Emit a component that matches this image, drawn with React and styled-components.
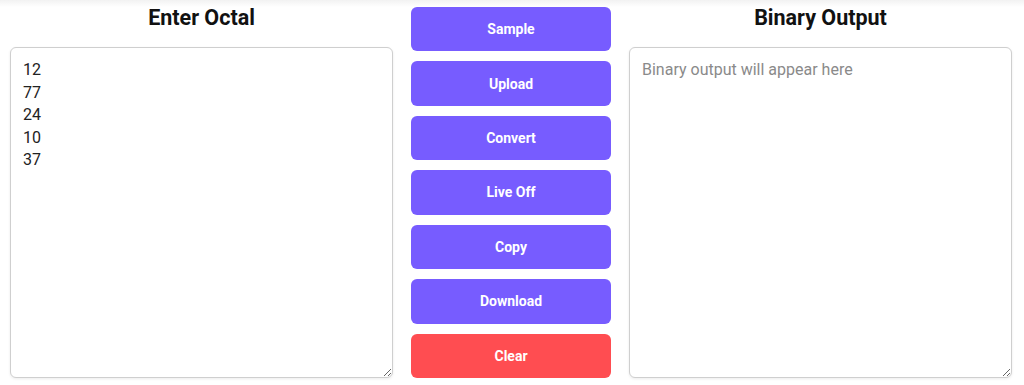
import React from "react";
import styled, { createGlobalStyle } from "styled-components";

const Global = createGlobalStyle`
  html, body { margin: 0; padding: 0; }
  body {
    background: linear-gradient(#f2f2f2 0px, #ffffff 7px) no-repeat, #ffffff;
    font-family: Roboto, "Liberation Sans", Arial, sans-serif;
  }
  * { box-sizing: border-box; }
`;

const Layout = styled.div`
  display: grid;
  grid-template-columns: 1fr 200px 1fr;
  column-gap: 18px;
  padding: 6px 12px 0 10px;
  height: 385px;
`;

const Panel = styled.section`
  display: flex;
  flex-direction: column;
  height: 372px;
`;

const Heading = styled.h2`
  margin: 0 0 17px;
  font-size: 21.5px;
  line-height: 24px;
  font-weight: 700;
  text-align: center;
  color: #111;
`;

const Area = styled.textarea`
  flex: 1;
  width: 100%;
  padding: 11px 12px 10px;
  border: 1px solid #cfcfcf;
  border-radius: 6px;
  box-shadow: 0 1px 3px rgba(0, 0, 0, 0.08);
  font-family: Roboto, "Liberation Sans", Arial, sans-serif;
  font-size: 16px;
  line-height: 22.5px;
  color: #222;
  background: #fff;
  resize: vertical;
  outline: none;
  &::placeholder { color: #8a8a8a; }
`;

const Actions = styled.div`
  display: flex;
  flex-direction: column;
  gap: 10px;
  padding-top: 1px;
  height: 372px;
`;

const Action = styled.button`
  flex: 1;
  border: none;
  border-radius: 6px;
  background: ${(p) => (p.$danger ? "#ff4d51" : "#775cff")};
  color: #fff;
  font-family: Roboto, "Liberation Sans", Arial, sans-serif;
  font-size: 14px;
  font-weight: 700;
  cursor: pointer;
`;

export default function App() {
  return (
    <>
      <Global />
      <Layout>
        <Panel>
          <Heading>Enter Octal</Heading>
          <Area defaultValue={"12\n77\n24\n10\n37"} />
        </Panel>
        <Actions>
          <Action>Sample</Action>
          <Action>Upload</Action>
          <Action>Convert</Action>
          <Action>Live Off</Action>
          <Action>Copy</Action>
          <Action>Download</Action>
          <Action $danger>Clear</Action>
        </Actions>
        <Panel>
          <Heading>Binary Output</Heading>
          <Area readOnly placeholder="Binary output will appear here" />
        </Panel>
      </Layout>
    </>
  );
}
